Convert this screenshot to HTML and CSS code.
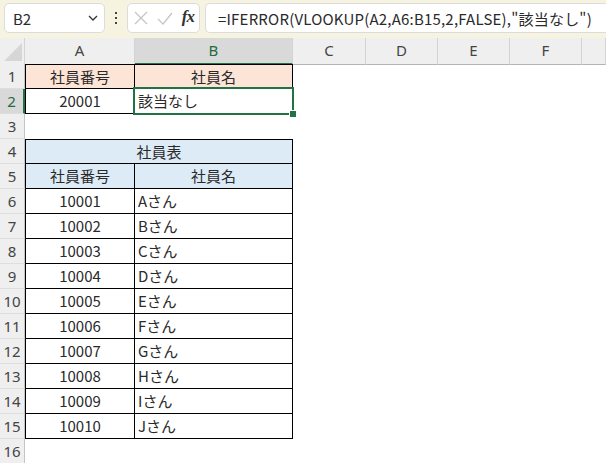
FILE: index.html
```html
<!DOCTYPE html>
<html lang="ja">
<head>
    <meta charset="UTF-8">
    <title>VLOOKUP IFERROR</title>
    <link rel="stylesheet" href="styles.css">
</head>
<body>
    <div class="topbar">
        <div class="namebox">
            <span>B2</span>
            <svg width="10" height="6" viewBox="0 0 10 6"><path d="M1 1 L5 5 L9 1" fill="none" stroke="#333" stroke-width="1.3"/></svg>
        </div>
        <div class="grip"><i></i><i></i><i></i></div>
        <div class="fxbox">
            <svg width="14" height="14" viewBox="0 0 14 14"><path d="M1 1 L13 13 M13 1 L1 13" stroke="#c4c4c4" stroke-width="1.2"/></svg>
            <svg width="16" height="13" viewBox="0 0 16 13"><path d="M1 7 L6 12 L15 1" fill="none" stroke="#c4c4c4" stroke-width="1.2"/></svg>
            <span class="fx">fx</span>
        </div>
        <div class="formula">=IFERROR(VLOOKUP(A2,A6:B15,2,FALSE),"該当なし")</div>
    </div>

    <div class="sheet">
        <div class="row hdr">
            <div class="corner"><svg width="18" height="18" viewBox="0 0 18 18"><path d="M18 0 L18 18 L0 18 Z" fill="#d6d6d6"/></svg></div>
            <div class="ch">A</div>
            <div class="ch on">B</div>
            <div class="ch">C</div>
            <div class="ch">D</div>
            <div class="ch">E</div>
            <div class="ch">F</div>
            <div class="ch"></div>
        </div>

        <div class="row">
            <div class="rh">1</div>
            <div class="c top first peach mid">社員番号</div>
            <div class="c top peach mid">社員名</div>
        </div>
        <div class="row">
            <div class="rh on">2</div>
            <div class="c first mid">20001</div>
            <div class="c name sel-cell">該当なし<div class="sel"><b></b></div></div>
        </div>
        <div class="row">
            <div class="rh">3</div>
        </div>
        <div class="row">
            <div class="rh">4</div>
            <div class="c top first blue mid span2">社員表</div>
        </div>
        <div class="row">
            <div class="rh">5</div>
            <div class="c first blue mid">社員番号</div>
            <div class="c blue mid">社員名</div>
        </div>
        <div class="row"><div class="rh">6</div><div class="c first mid">10001</div><div class="c name">Aさん</div></div>
        <div class="row"><div class="rh">7</div><div class="c first mid">10002</div><div class="c name">Bさん</div></div>
        <div class="row"><div class="rh">8</div><div class="c first mid">10003</div><div class="c name">Cさん</div></div>
        <div class="row"><div class="rh">9</div><div class="c first mid">10004</div><div class="c name">Dさん</div></div>
        <div class="row"><div class="rh">10</div><div class="c first mid">10005</div><div class="c name">Eさん</div></div>
        <div class="row"><div class="rh">11</div><div class="c first mid">10006</div><div class="c name">Fさん</div></div>
        <div class="row"><div class="rh">12</div><div class="c first mid">10007</div><div class="c name">Gさん</div></div>
        <div class="row"><div class="rh">13</div><div class="c first mid">10008</div><div class="c name">Hさん</div></div>
        <div class="row"><div class="rh">14</div><div class="c first mid">10009</div><div class="c name">Iさん</div></div>
        <div class="row"><div class="rh">15</div><div class="c first mid">10010</div><div class="c name">Jさん</div></div>
        <div class="row"><div class="rh">16</div></div>
    </div>
</body>
</html>
```

FILE: styles.css
```css
body {
    margin: 0;
    font-family: "Noto Sans CJK JP", "Noto Sans", sans-serif;
    color: #2a2a2a;
    background: #fff;
    overflow: hidden;
}
.topbar {
    height: 38px;
    background: #f6f3e1;
    display: flex;
    align-items: flex-start;
    padding: 3px 0 0 4px;
    box-sizing: border-box;
}
.namebox, .fxbox, .formula {
    height: 30px;
    box-sizing: border-box;
    background: #fff;
    border: 1px solid #dcdcdc;
    border-radius: 5px;
    display: flex;
    align-items: center;
}
.namebox {
    width: 101px;
    padding: 0 6px 0 8px;
    justify-content: space-between;
    font-size: 15px;
}
.grip {
    width: 22px;
    height: 30px;
    display: flex;
    flex-direction: column;
    align-items: center;
    justify-content: center;
    gap: 3px;
}
.grip i {
    width: 2px;
    height: 2px;
    background: #444;
}
.fxbox {
    width: 73px;
    padding: 0 5px 0 6px;
    justify-content: space-between;
}
.fx {
    font-family: "Liberation Serif", serif;
    font-style: italic;
    font-weight: bold;
    font-size: 17px;
    color: #333;
    letter-spacing: -1px;
    margin-top: -3px;
}
.formula {
    margin-left: 5px;
    flex: 1;
    border-right: none;
    border-radius: 5px 0 0 5px;
    padding-left: 12px;
    font-size: 15px;
    letter-spacing: 0.2px;
    white-space: nowrap;
}

.row {
    display: grid;
    grid-template-columns: 25px 110px 158px 73px 72px 72px 72px 1fr;
    height: 25px;
}
.hdr {
    height: 26px;
}
.corner, .ch {
    background: #efefef;
    border-bottom: 1px solid #b4b4b4;
    box-sizing: border-box;
}
.corner {
    border-right: 1px solid #d4d4d4;
    display: flex;
    align-items: flex-end;
    justify-content: flex-end;
    padding: 0 2px 3px 0;
}
.ch {
    border-right: 1px solid #d4d4d4;
    text-align: center;
    font-size: 15px;
    line-height: 25px;
    color: #444;
    font-family: "Noto Sans", sans-serif;
}
.ch.on {
    background: #d9d9d9;
    color: #1e6b41;
    border-bottom: 2px solid #217346;
}
.rh {
    background: #efefef;
    border-right: 1px solid #c4c4c4;
    border-bottom: 1px solid #dedede;
    box-sizing: border-box;
    text-align: center;
    font-size: 15px;
    line-height: 24px;
    color: #444;
    font-family: "Noto Sans", sans-serif;
}
.rh.on {
    background: #d9d9d9;
    color: #1e6b41;
    border-right: 2px solid #217346;
}

.c {
    box-sizing: border-box;
    border-right: 1px solid #000;
    border-bottom: 1px solid #000;
    font-size: 15px;
    line-height: 24px;
    white-space: nowrap;
}
.first {
    border-left: 1px solid #000;
}
.top {
    border-top: 1px solid #000;
    line-height: 23px;
}
.mid {
    text-align: center;
}
.name {
    padding-left: 3px;
}
.peach {
    background: #fce4d6;
}
.blue {
    background: #ddebf7;
}
.span2 {
    grid-column: span 2;
}

.sel-cell {
    position: relative;
}
.sel {
    position: absolute;
    left: -2px;
    top: -2px;
    right: -2px;
    bottom: -2px;
    border: 2px solid #217346;
}
.sel b {
    position: absolute;
    right: -5px;
    bottom: -5px;
    width: 6px;
    height: 6px;
    background: #217346;
    border: 1px solid #fff;
}
```
